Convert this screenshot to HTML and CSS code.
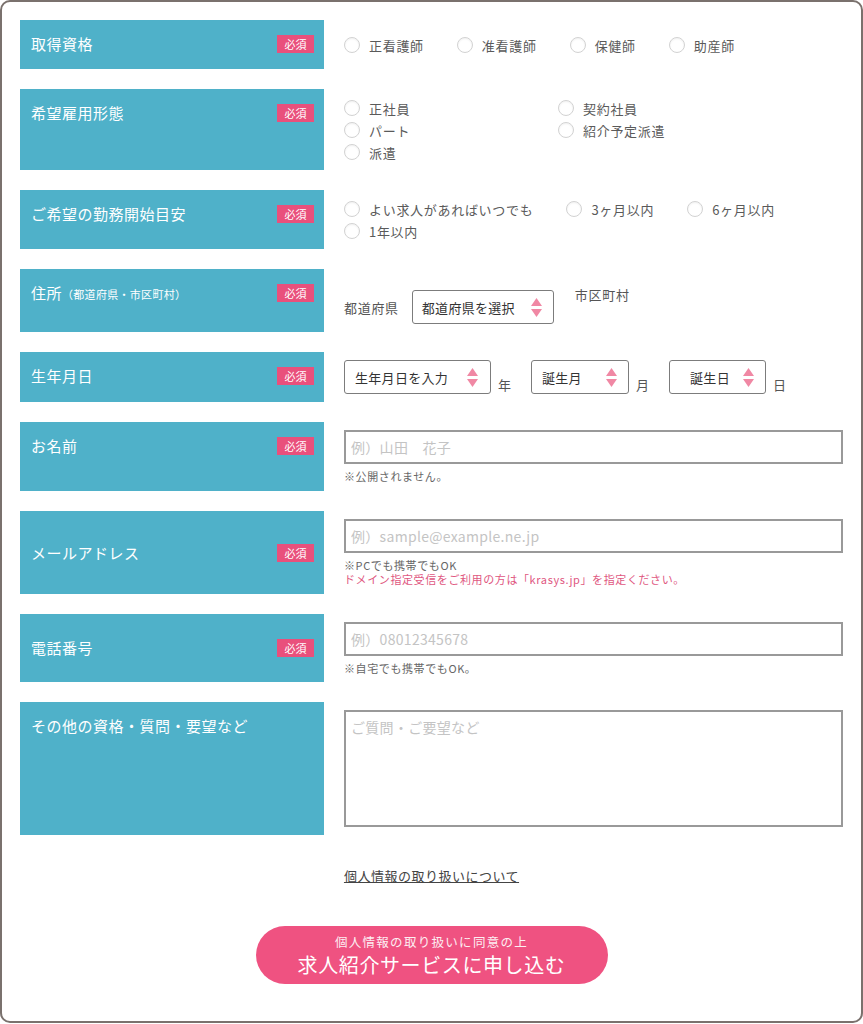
FILE: index.html
```html
<!DOCTYPE html>
<html lang="ja">
<head>
  <meta charset="UTF-8" />
  <meta name="viewport" content="width=device-width, initial-scale=1.0"/>
  <title>求人紹介サービス – 応募フォーム</title>
  <link rel="stylesheet" href="styles.css">
</head>
<body>
  <form class="entry-form">

    <div class="row">
      <div class="label">取得資格 <span class="badge">必須</span></div>
      <div class="field middle">
        <div class="radios">
          <label class="radio"><span class="dot"></span>正看護師</label>
          <label class="radio"><span class="dot"></span>准看護師</label>
          <label class="radio"><span class="dot"></span>保健師</label>
          <label class="radio"><span class="dot"></span>助産師</label>
        </div>
      </div>
    </div>

    <div class="row">
      <div class="label">希望雇用形態 <span class="badge">必須</span></div>
      <div class="field tight">
        <div class="radios two-cols">
          <label class="radio"><span class="dot"></span>正社員</label>
          <label class="radio"><span class="dot"></span>契約社員</label>
          <label class="radio"><span class="dot"></span>パート</label>
          <label class="radio"><span class="dot"></span>紹介予定派遣</label>
          <label class="radio"><span class="dot"></span>派遣</label>
        </div>
      </div>
    </div>

    <div class="row">
      <div class="label">ご希望の勤務開始目安 <span class="badge">必須</span></div>
      <div class="field tight">
        <div class="radios">
          <label class="radio"><span class="dot"></span>よい求人があればいつでも</label>
          <label class="radio"><span class="dot"></span>3ヶ月以内</label>
          <label class="radio"><span class="dot"></span>6ヶ月以内</label>
          <label class="radio"><span class="dot"></span>1年以内</label>
        </div>
      </div>
    </div>

    <div class="row">
      <div class="label"><span>住所<small>（都道府県・市区町村）</small></span> <span class="badge">必須</span></div>
      <div class="field address">
        <div class="pref">
          <span class="caption">都道府県</span>
          <div class="select pref-select">
            <span>都道府県を選択</span>
            <svg class="arrows" width="11" height="19" viewBox="0 0 11 19"><polygon points="5.5,0 11,8 0,8"/><polygon points="0,11 11,11 5.5,19"/></svg>
          </div>
        </div>
        <span class="caption city">市区町村</span>
      </div>
    </div>

    <div class="row">
      <div class="label">生年月日 <span class="badge">必須</span></div>
      <div class="field birth">
        <div class="select year">
          <span>生年月日を入力</span>
          <svg class="arrows" width="11" height="19" viewBox="0 0 11 19"><polygon points="5.5,0 11,8 0,8"/><polygon points="0,11 11,11 5.5,19"/></svg>
        </div>
        <span class="unit">年</span>
        <div class="select month">
          <span>誕生月</span>
          <svg class="arrows" width="11" height="19" viewBox="0 0 11 19"><polygon points="5.5,0 11,8 0,8"/><polygon points="0,11 11,11 5.5,19"/></svg>
        </div>
        <span class="unit">月</span>
        <div class="select day">
          <span>誕生日</span>
          <svg class="arrows" width="11" height="19" viewBox="0 0 11 19"><polygon points="5.5,0 11,8 0,8"/><polygon points="0,11 11,11 5.5,19"/></svg>
        </div>
        <span class="unit">日</span>
      </div>
    </div>

    <div class="row">
      <div class="label">お名前 <span class="badge">必須</span></div>
      <div class="field">
        <input type="text" class="text-input" placeholder="例）山田　花子">
        <p class="note">※公開されません。</p>
      </div>
    </div>

    <div class="row">
      <div class="label center">メールアドレス <span class="badge">必須</span></div>
      <div class="field">
        <input type="email" class="text-input" placeholder="例）sample@example.ne.jp">
        <p class="note">※PCでも携帯でもOK<br><span class="warn">ドメイン指定受信をご利用の方は「krasys.jp」を指定ください。</span></p>
      </div>
    </div>

    <div class="row">
      <div class="label center">電話番号 <span class="badge">必須</span></div>
      <div class="field tight">
        <input type="tel" class="text-input" placeholder="例）08012345678">
        <p class="note">※自宅でも携帯でもOK。</p>
      </div>
    </div>

    <div class="row">
      <div class="label">その他の資格・質問・要望など</div>
      <div class="field">
        <textarea class="text-area" placeholder="ご質問・ご要望など"></textarea>
      </div>
    </div>

    <p class="privacy"><a href="#">個人情報の取り扱いについて</a></p>

    <button type="submit" class="submit">
      <span class="submit-sub">個人情報の取り扱いに同意の上</span>
      <span class="submit-main">求人紹介サービスに申し込む</span>
    </button>
  </form>
</body>
</html>
```

FILE: styles.css
```css
html, body {
  margin: 0;
  padding: 0;
  background: #fff;
  font-family: "Noto Sans CJK JP", "Noto Sans", sans-serif;
  color: #555;
}

.entry-form {
  box-sizing: border-box;
  width: 863px;
  min-height: 1023px;
  margin: 0;
  padding: 18px 18px 35px;
  border: 2px solid #7a716d;
  border-radius: 10px;
  display: flex;
  flex-direction: column;
}

.row {
  display: grid;
  grid-template-columns: 304px 1fr;
  column-gap: 20px;
  margin-bottom: 20px;
}

.label {
  min-height: 49px;
  box-sizing: border-box;
  background-color: #4fb1c9;
  color: #fff;
  padding: 15px 10px 0 11px;
  font-size: 15px;
  line-height: 18px;
  letter-spacing: 0.5px;
  display: flex;
  justify-content: space-between;
  align-items: flex-start;
}

.label.center {
  align-items: center;
  padding-top: 0;
}

.label small {
  font-size: 11px;
  letter-spacing: 0.3px;
}

.badge {
  width: 37px;
  height: 18px;
  background-color: #e9507c;
  color: #fff;
  font-size: 11px;
  line-height: 18px;
  text-align: center;
  letter-spacing: 0;
}

.field {
  padding: 8px 0 8px;
}

.field.tight {
  padding-bottom: 7px;
}

.field.middle {
  align-self: center;
  padding: 1px 0 0;
}

/* radios */
.radios {
  display: flex;
  flex-wrap: wrap;
  column-gap: 33px;
}

.radios.two-cols {
  display: grid;
  grid-template-columns: 214px 214px;
  column-gap: 0;
}

.radio {
  display: inline-flex;
  align-items: center;
  gap: 9px;
  height: 22px;
  font-size: 13px;
  letter-spacing: 0.7px;
  color: #5a5a5a;
}

.dot {
  width: 14px;
  height: 14px;
  border: 1px solid #d2d2d2;
  border-radius: 50%;
  background: #fff;
  box-shadow: inset 0 1px 2px rgba(0, 0, 0, 0.06);
}

/* selects */
.select {
  box-sizing: border-box;
  height: 34px;
  border: 1px solid #7c7c7c;
  border-radius: 3px;
  display: flex;
  align-items: center;
  justify-content: space-between;
  font-size: 13px;
  letter-spacing: 0.3px;
  color: #333;
}

.arrows {
  fill: #f088a4;
  flex-shrink: 0;
}

.caption {
  font-size: 13px;
  letter-spacing: 0.7px;
  color: #555;
}

.address {
  display: flex;
  align-items: flex-start;
}

.pref {
  display: flex;
  align-items: center;
  gap: 13px;
  margin-top: 13px;
}

.pref-select {
  width: 142px;
  padding: 0 11px 0 9px;
}

.city {
  margin: 9px 0 0 21px;
  line-height: 18px;
}

.birth {
  display: flex;
  align-items: flex-end;
}

.birth .select.year {
  width: 147px;
  padding: 0 12px 0 10px;
}

.birth .select.month {
  width: 98px;
  padding: 0 11px 0 10px;
}

.birth .select.day {
  width: 97px;
  padding: 0 11px 0 20px;
}

.unit {
  font-size: 13px;
  line-height: 18px;
  margin: 0 20px 0 7px;
}

.unit:last-child {
  margin-right: 0;
}

/* text inputs */
.text-input,
.text-area {
  display: block;
  box-sizing: border-box;
  width: 100%;
  margin: 0;
  border: 2px solid #999;
  border-radius: 0;
  font-family: inherit;
  font-size: 14px;
  letter-spacing: 0.3px;
  color: #333;
  outline: none;
  background: #fff;
}

.text-input {
  height: 34px;
  padding: 0 5px;
}

.text-area {
  height: 117px;
  padding: 5px 5px;
  resize: none;
}

.text-input::placeholder,
.text-area::placeholder {
  color: #c4c4c4;
}

.note {
  margin: 5px 0 0;
  font-size: 11px;
  line-height: 14px;
  letter-spacing: 0.6px;
  color: #666;
}

.warn {
  color: #e0577f;
}

.privacy {
  margin: 11px 0 0;
  text-align: center;
  font-size: 13px;
  line-height: 20px;
  letter-spacing: 0.5px;
}

.privacy a {
  color: #444;
  text-decoration: underline;
}

.submit {
  align-self: center;
  margin-top: 40px;
  width: 352px;
  height: 58px;
  border: none;
  border-radius: 29px;
  background-color: #ef5281;
  color: #fff;
  font-family: inherit;
  cursor: pointer;
  display: flex;
  flex-direction: column;
  align-items: center;
  justify-content: center;
  gap: 4px;
}

.submit-sub {
  font-size: 12.5px;
  line-height: 15px;
  letter-spacing: 1.3px;
  opacity: 0.9;
}

.submit-main {
  font-size: 20px;
  line-height: 24px;
  letter-spacing: 0.6px;
}
```
